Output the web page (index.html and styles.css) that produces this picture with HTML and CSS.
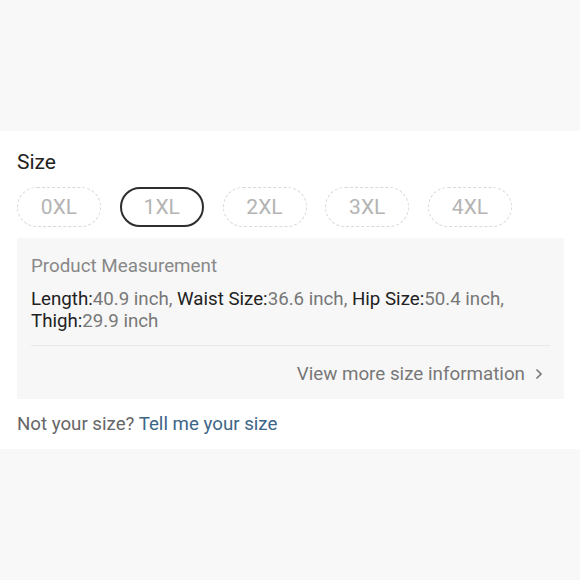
FILE: index.html
```html
<!DOCTYPE html>
<html>
<head>
<meta charset="utf-8">
<link rel="stylesheet" href="styles.css">
</head>
<body>
<div class="top"></div>
<section class="card">
  <h2 class="title">Size</h2>
  <div class="chips">
    <span class="chip">0XL</span>
    <span class="chip selected">1XL</span>
    <span class="chip">2XL</span>
    <span class="chip">3XL</span>
    <span class="chip">4XL</span>
  </div>
  <div class="measure">
    <div class="m-title">Product Measurement</div>
    <p class="m-text"><span class="lbl">Length:</span>40.9 inch, <span class="lbl">Waist Size:</span>36.6 inch, <span class="lbl">Hip Size:</span>50.4 inch, <span class="lbl">Thigh:</span>29.9 inch</p>
    <div class="more">View more size information
      <svg class="chev" width="10" height="14" viewBox="0 0 10 14"><path d="M2.5 2.5 L7 7 L2.5 11.5" fill="none" stroke="#777" stroke-width="1.6"/></svg>
    </div>
  </div>
  <p class="notsize">Not your size? <a class="tell">Tell me your size</a></p>
</section>
<div class="bottom"></div>
</body>
</html>
```

FILE: styles.css
```css
* { box-sizing: border-box; }
html, body { margin: 0; padding: 0; }
body {
  width: 580px;
  height: 580px;
  overflow: hidden;
  background: #f8f8f8;
  font-family: Roboto, "Noto Sans", sans-serif;
}
.top { height: 131px; background: #f8f8f8; }
.card {
  background: #fff;
  padding: 17px 16px 0 17px;
  height: 318px;
}
.title {
  margin: 0;
  font-size: 21px;
  font-weight: 400;
  color: #222;
  line-height: 28px;
}
.chips {
  display: flex;
  gap: 18.75px;
  margin-top: 11px;
}
.chip {
  width: 84px;
  height: 40px;
  border: 1.5px dashed #d8d8d8;
  border-radius: 20px;
  display: flex;
  align-items: center;
  justify-content: center;
  font-size: 21px;
  color: #b4b4b4;
}
.chip.selected {
  border: 2px solid #2e2e2e;
}
.measure {
  margin-top: 11px;
  background: #f7f7f7;
  padding: 16px 14px 0 14px;
  height: 161px;
}
.m-title {
  font-size: 18.8px;
  color: #888;
  line-height: 24px;
}
.m-text {
  margin: 10px 0 0 0;
  font-size: 18.7px;
  line-height: 22px;
  color: #777;
  padding-bottom: 13px;
  border-bottom: 1px solid #e8e8e8;
}
.lbl { color: #222; }
.more {
  display: flex;
  justify-content: flex-end;
  align-items: center;
  gap: 9px;
  font-size: 18.8px;
  color: #777;
  margin-top: 17px;
  padding-right: 6px;
}
.notsize {
  margin: 14px 0 0 0;
  font-size: 18.7px;
  color: #666;
}
.tell { color: #3d6587; }
.bottom { height: 131px; background: #f8f8f8; }
```
